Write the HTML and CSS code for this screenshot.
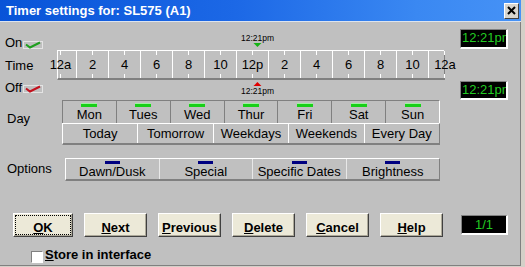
FILE: index.html
```html
<!DOCTYPE html>
<html>
<head>
<meta charset="utf-8">
<link rel="stylesheet" href="styles.css">
</head>
<body>
<div class="window">
  <div class="titlebar">
    <span class="title">Timer settings for: SL575 (A1)</span>
    <span class="close"><svg width="9" height="9" viewBox="0 0 9 9"><path d="M1 1L8 8M8 1L1 8" stroke="#000" stroke-width="2"/></svg></span>
  </div>
  <div class="body">
    <section class="timer">
      <div class="tlabels">
        <div class="tl tl-on">On<svg class="chk" width="20" height="8" viewBox="0 0 20 8"><rect x="0.5" y="0.5" width="19" height="7" fill="none" stroke="#e4e4e4"/><polyline points="3,3.5 7,6.5 17,1.5" fill="none" stroke="#1f9f1f" stroke-width="2"/></svg></div>
        <div class="tl tl-time">Time</div>
        <div class="tl tl-off">Off<svg class="chk chk-off" width="20" height="8" viewBox="0 0 20 8"><rect x="0.5" y="0.5" width="19" height="7" fill="none" stroke="#e4e4e4"/><polyline points="3,3.5 7,6.5 17,1.5" fill="none" stroke="#c4101c" stroke-width="2"/></svg></div>
      </div>
      <div class="scale">
        <div class="marker marker-top" style="left: calc(3px + 12.35 * 16px)"><span>12:21pm</span><i class="tri-down"></i></div>
        <div class="track">
          <div class="slots">
            <div class="slot">12a</div>
            <div class="slot">2</div>
            <div class="slot">4</div>
            <div class="slot">6</div>
            <div class="slot">8</div>
            <div class="slot">10</div>
            <div class="slot">12p</div>
            <div class="slot">2</div>
            <div class="slot">4</div>
            <div class="slot">6</div>
            <div class="slot">8</div>
            <div class="slot">10</div>
            <div class="slot">12a</div>
          </div>
        </div>
        <div class="marker marker-bottom" style="left: calc(3px + 12.35 * 16px)"><i class="tri-up"></i><span>12:21pm</span></div>
      </div>
      <div class="lcds">
        <div class="lcd">12:21pm</div>
        <div class="lcd lcd-off">12:21pm</div>
      </div>
    </section>

    <section class="days">
      <div class="rowlabel">Day</div>
      <div class="daygrid">
        <div class="dayrow">
          <div class="day"><i class="led-g"></i><span>Mon</span></div>
          <div class="day"><i class="led-g"></i><span>Tues</span></div>
          <div class="day"><i class="led-g"></i><span>Wed</span></div>
          <div class="day"><i class="led-g"></i><span>Thur</span></div>
          <div class="day"><i class="led-g"></i><span>Fri</span></div>
          <div class="day"><i class="led-g"></i><span>Sat</span></div>
          <div class="day"><i class="led-g"></i><span>Sun</span></div>
        </div>
        <div class="presetrow">
          <div class="preset">Today</div>
          <div class="preset">Tomorrow</div>
          <div class="preset">Weekdays</div>
          <div class="preset">Weekends</div>
          <div class="preset">Every Day</div>
        </div>
      </div>
    </section>

    <section class="options">
      <div class="rowlabel optlabel">Options</div>
      <div class="optrow">
        <div class="opt"><i class="led-b"></i><span>Dawn/Dusk</span></div>
        <div class="opt"><i class="led-b"></i><span>Special</span></div>
        <div class="opt"><i class="led-b"></i><span>Specific Dates</span></div>
        <div class="opt"><i class="led-b"></i><span>Brightness</span></div>
      </div>
    </section>

    <section class="actions">
      <div class="btn btn-ok"><u>O</u>K</div>
      <div class="btn"><u>N</u>ext</div>
      <div class="btn"><u>P</u>revious</div>
      <div class="btn"><u>D</u>elete</div>
      <div class="btn"><u>C</u>ancel</div>
      <div class="btn"><u>H</u>elp</div>
      <div class="lcd lcd-count">1/1</div>
    </section>

    <label class="store"><span class="cb"></span><span class="store-text"><u>S</u>tore in interface</span></label>
  </div>
</div>
</body>
</html>
```

FILE: styles.css
```css
* { box-sizing: border-box; }
html, body { margin: 0; padding: 0; }
body {
  width: 525px;
  height: 267px;
  overflow: hidden;
  background: #d4d0c8;
  font-family: "Liberation Sans", Arial, sans-serif;
  font-size: 13px;
  color: #000;
}
.window {
  width: 521px;
  height: 266px;
  display: flex;
  flex-direction: column;
}
.titlebar {
  flex: none;
  height: 22px;
  display: flex;
  align-items: center;
  justify-content: space-between;
  padding: 0 2px 0 6px;
  background: linear-gradient(to right, #0854d8 0%, #1c68e6 45%, #3a88f2 80%, #4692f6 100%);
  border-bottom: 1px solid #dde4ee;
  color: #fff;
}
.title {
  font-weight: bold;
  font-size: 13px;
  line-height: 15px;
}
.close {
  width: 15px;
  height: 16px;
  display: flex;
  align-items: center;
  justify-content: center;
  background: #d8d5ce;
  border: 1px solid;
  border-color: #fff #404040 #404040 #fff;
}
.body {
  flex: 1;
  background: #c0c0c0;
  border-right: 1px solid #808080;
  border-bottom: 1px solid #808080;
}

/* timer section */
.timer { display: flex; height: 78px; }
.tlabels {
  width: 57px;
  display: flex;
  flex-direction: column;
  padding-left: 5px;
}
.tl { display: flex; line-height: 15px; }
.tl-on { height: 28px; align-items: flex-end; }
.tl-time { height: 30px; align-items: center; }
.tl-off { height: 20px; align-items: flex-start; }
.chk { margin-left: 1px; margin-bottom: 1px; flex: none; }
.chk-off { margin-top: 5px; margin-bottom: 0; }

.scale {
  position: relative;
  width: 388px;
  padding-top: 28px;
}
.track {
  width: 388px;
  height: 30px;
  border-top: 1px solid #fff;
  border-left: 1px solid #fff;
  border-right: 1px solid #808080;
  border-bottom: 2px solid #808080;
}
.slots {
  display: flex;
  height: 100%;
  margin-left: -13px;
}
.slot {
  position: relative;
  flex: none;
  width: 32px;
  height: 100%;
  border-right: 1px solid #fff;
  display: flex;
  align-items: center;
  justify-content: center;
  line-height: 15px;
  white-space: nowrap;
}
.slot:last-child { border-right: none; }
.slot::before, .slot::after {
  content: "";
  position: absolute;
  left: 15px;
  width: 1px;
  height: 4px;
  background: #fff;
}
.slot::before { top: 0; }
.slot::after { bottom: 0; }

.marker {
  position: absolute;
  display: flex;
  flex-direction: column;
  align-items: center;
  transform: translateX(-50%);
  font-size: 8.5px;
  line-height: 10px;
  white-space: nowrap;
}
.marker-top { top: 11px; }
.marker-bottom { top: 60px; }
.tri-down {
  width: 0; height: 0;
  border-left: 4px solid transparent;
  border-right: 4px solid transparent;
  border-top: 4px solid #14b414;
}
.tri-up {
  width: 0; height: 0;
  border-left: 4px solid transparent;
  border-right: 4px solid transparent;
  border-bottom: 4px solid #e00000;
}

.lcds {
  margin-left: 15px;
  width: 48px;
  display: flex;
  flex-direction: column;
  padding-top: 7px;
}
.lcd {
  width: 48px;
  height: 20px;
  background: #000;
  border-style: solid;
  border-width: 1px 2px 2px 1px;
  border-color: #808080 #fff #fff #808080;
  color: #22cc22;
  font-size: 13px;
  line-height: 15px;
  padding-left: 1px;
  overflow: hidden;
  white-space: nowrap;
}
.lcd-off { margin-top: 32px; }

/* days */
.days { display: flex; height: 45px; }
.rowlabel {
  width: 62px;
  padding-left: 7px;
  padding-top: 11px;
  line-height: 15px;
  flex: none;
}
.daygrid { width: 378px; }
.dayrow {
  display: flex;
  height: 23px;
  border-top: 1px solid #808080;
  border-right: 1px solid #fff;
}
.day {
  flex: 1;
  border-left: 1px solid #808080;
  display: flex;
  flex-direction: column;
  align-items: center;
  line-height: 15px;
}
.led-g {
  width: 16px;
  height: 4px;
  margin-top: 2px;
  background: #18d018;
  border-top: 1px solid #a0f0a0;
}
.presetrow {
  display: flex;
  height: 22px;
  border-top: 1px solid #fff;
  border-left: 1px solid #fff;
  border-right: 1px solid #808080;
  border-bottom: 2px solid #808080;
}
.preset {
  flex: 1;
  text-align: center;
  line-height: 15px;
  padding-top: 2px;
}
.preset + .preset { border-left: 1px solid #fff; }

/* options */
.options { display: flex; height: 23px; margin-top: 13px; }
.optlabel { width: 65px; padding-top: 3px; }
.optrow {
  width: 375px;
  display: flex;
  border-top: 1px solid #fff;
  border-left: 1px solid #fff;
  border-right: 1px solid #808080;
  border-bottom: 2px solid #808080;
}
.opt {
  flex: 1;
  display: flex;
  flex-direction: column;
  align-items: center;
  line-height: 15px;
}
.opt + .opt { border-left: 1px solid #e8e8e8; }
.led-b {
  width: 15px;
  height: 3px;
  margin-top: 2px;
  background: #000080;
}

/* actions */
.actions {
  display: flex;
  gap: 11px;
  height: 24px;
  margin-top: 32px;
  padding-left: 13px;
}
.btn {
  position: relative;
  width: 63px;
  height: 24px;
  flex: none;
  background: #ece9d8;
  border: 1px solid;
  border-color: #fff #404040 #404040 #fff;
  box-shadow: inset -1px -1px #aca899;
  font-weight: bold;
  font-size: 13px;
  line-height: 15px;
  padding-top: 6px;
  text-align: center;
}
.btn-ok { width: 60px; }
.btn-ok::after {
  content: "";
  position: absolute;
  top: 1px; left: 1px; right: 1px; bottom: 1px;
  border: 1px dotted #000;
}
.lcd-count {
  width: 47px;
  margin-left: 7px;
  margin-top: 2px;
  text-align: center;
  padding-left: 0;
  font-size: 13px;
  padding-top: 1px;
}

/* store */
.store {
  display: flex;
  align-items: flex-start;
  height: 15px;
  margin-top: 10px;
  padding-left: 31px;
  line-height: 15px;
}
.cb {
  width: 12px;
  height: 12px;
  margin-top: 4px;
  background: #fff;
  border: 1px solid;
  border-color: #808080 #fff #fff #808080;
  flex: none;
}
.store-text { margin-left: 2px; font-weight: bold; }
```
